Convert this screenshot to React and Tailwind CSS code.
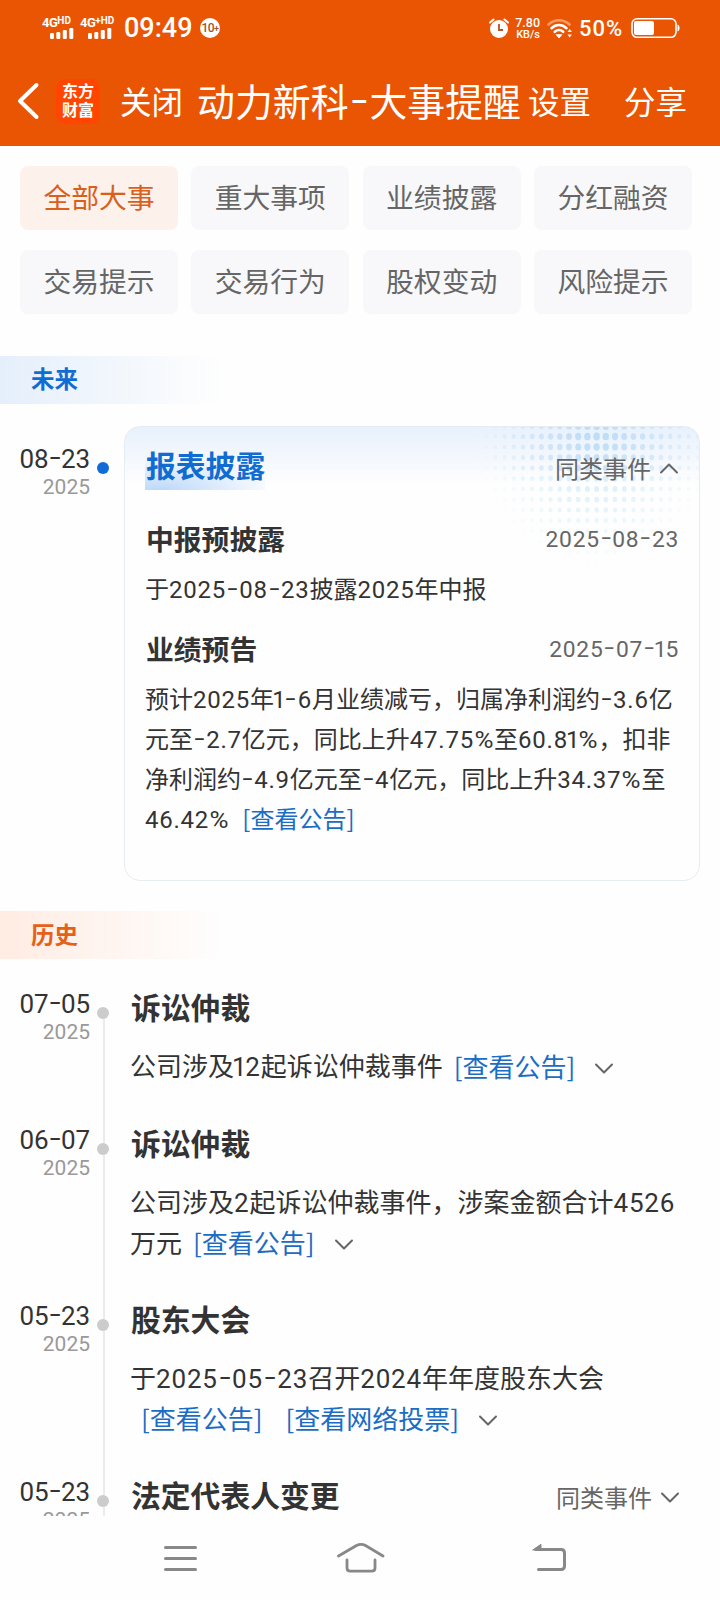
import React, { useState } from "react";

const TABS = [
  "全部大事",
  "重大事项",
  "业绩披露",
  "分红融资",
  "交易提示",
  "交易行为",
  "股权变动",
  "风险提示",
];

const REPORT_LINES = [
  "预计2025年1-6月业绩减亏，归属净利润约-3.6亿",
  "元至-2.7亿元，同比上升47.75%至60.81%，扣非",
  "净利润约-4.9亿元至-4亿元，同比上升34.37%至",
];

const HISTORY = [
  {
    date: "07-05",
    year: "2025",
    title: "诉讼仲裁",
    lines: [{ text: "公司涉及12起诉讼仲裁事件", links: ["[查看公告]"], more: true }],
  },
  {
    date: "06-07",
    year: "2025",
    title: "诉讼仲裁",
    lines: [
      { text: "公司涉及2起诉讼仲裁事件，涉案金额合计4526" },
      { text: "万元", links: ["[查看公告]"], more: true },
    ],
  },
  {
    date: "05-23",
    year: "2025",
    title: "股东大会",
    lines: [
      { text: "于2025-05-23召开2024年年度股东大会" },
      { text: "", links: ["[查看公告]", "[查看网络投票]"], more: true },
    ],
  },
  {
    date: "05-23",
    year: "2025",
    title: "法定代表人变更",
    similar: true,
    lines: [],
  },
];

// Latin digits use Roboto, hyphens are widened to almost a full digit
function Txt({ children, tight }) {
  return children.split(/(-|1|%|[\d.]+?(?=[^\d.]|1|$))/).map((part, i) => {
    if (part === "-") {
      return (
        <span
          key={i}
          className={`inline-block -translate-y-[0.07em] scale-x-[1.5] text-center font-['Roboto'] leading-none ${
            tight ? "w-[0.48em]" : "w-[0.55em]"
          }`}
        >
          -
        </span>
      );
    }
    if (part === "1") {
      return (
        <span key={i} className="-ml-[0.08em] -mr-[0.05em] font-['Roboto']">
          1
        </span>
      );
    }
    if (part === "%") {
      return (
        <span key={i} className="inline-block w-[0.84em] scale-x-[1.08] text-center font-['Roboto'] leading-none">
          %
        </span>
      );
    }
    if (/^[\d.]+$/.test(part)) {
      return (
        <span key={i} className={tight ? "font-['Roboto'] tracking-[-0.005em]" : "font-['Roboto'] tracking-[0.032em]"}>
          {part}
        </span>
      );
    }
    return part;
  });
}

function Chevron({ up, className = "" }) {
  return (
    <svg width="20" height="12" viewBox="0 0 20 12" fill="none" className={className}>
      <path
        d={up ? "M2 10.5 10 2.5 18 10.5" : "M2 1.5 10 9.5 18 1.5"}
        stroke="#666"
        strokeWidth="2"
        strokeLinecap="round"
        strokeLinejoin="round"
      />
    </svg>
  );
}

function Signal({ label, sup }) {
  return (
    <div className="flex flex-col">
      <div className="flex h-[11px] items-start whitespace-nowrap font-['Roboto'] font-bold leading-none">
        <span className="text-[13px] leading-[12px] tracking-[-0.5px]">{label}</span>
        <span className="text-[10px] leading-[8px]">{sup}</span>
      </div>
      <svg width="24" height="11" viewBox="0 0 24 11" fill="#fff" className="ml-2">
        <rect x="0" y="5" width="4" height="6" rx="1.2" />
        <rect x="6.3" y="4" width="4" height="7" rx="1.2" />
        <rect x="12.8" y="2" width="4" height="9" rx="1.2" />
        <rect x="19.3" y="0" width="4" height="11" rx="1.2" />
      </svg>
    </div>
  );
}

function StatusBar() {
  return (
    <div className="flex h-[56px] items-start pl-[42px] pr-10 pt-4 text-white">
      <div className="mt-px w-[38px]">
        <Signal label="4G" sup="HD" />
      </div>
      <div className="mt-px w-[44px]">
        <Signal label="4G" sup="+HD" />
      </div>
      <span className="w-[76px] font-['Roboto'] text-[27px] font-medium leading-[24px]">09:49</span>
      <span className="mt-[2px] flex size-5 items-center justify-center rounded-full bg-white font-['Roboto'] text-[12px] font-medium leading-none tracking-[-0.5px] text-[#a5532a]">
        10<span className="pt-[3px] text-[9px]">+</span>
      </span>
      <div className="ml-auto flex">
        <svg width="20" height="22" viewBox="0 0 20 22" className="-ml-[2px] mr-[2px] mt-[2px]">
          <circle cx="10" cy="11" r="9" fill="#fff" />
          <path d="M1 4.5 4.5 1.5M19 4.5 15.5 1.5" stroke="#fff" strokeWidth="2" strokeLinecap="round" />
          <path d="M10 6v6h4" stroke="#b5541f" strokeWidth="1.8" fill="none" />
        </svg>
        <div className="ml-[2px] mr-[2px] flex w-[27px] flex-col items-end whitespace-nowrap pt-px font-['Roboto'] font-medium">
          <span className="text-[12.5px] leading-[12px]">7.80</span>
          <span className="text-[11px] leading-[11px]">KB/s</span>
        </div>
        <svg width="26" height="22" viewBox="0 0 26 22" fill="none" strokeWidth="2.6" strokeLinecap="round" className="ml-[5px] mt-[2px]">
          <path d="M1.5 6.5C7.5 0.8 16.5 0.8 22.5 6.5" stroke="#f89a63" />
          <path d="M4.5 10.2C9 6 15 6 19.5 10.2" stroke="#fff" />
          <path d="M7.8 13.8C10.5 11.5 13.5 11.5 16.2 13.8" stroke="#fff" />
          <path d="M9.5 17 12 20 14.5 17Z" fill="#fff" stroke="#fff" strokeWidth="1" />
          <path d="M20.5 14 22.7 11 24.9 14ZM20.5 16.5 22.7 19.5 24.9 16.5Z" fill="#fff" />
        </svg>
        <span className="ml-[6px] w-[52px] font-['Roboto'] text-[22px] font-medium leading-[26px] tracking-[1px]">50%</span>
        <svg width="49" height="22" viewBox="0 0 49 22" fill="none" className="mt-px">
          <rect x="1" y="1.8" width="44" height="18.5" rx="5" stroke="#fff" strokeWidth="1.6" />
          <rect x="3" y="4" width="20" height="14" rx="2" fill="#fff" />
          <path d="M46.500 7.500c1.500.4 2 1.600 2 3.500s-.5 3.100-2 3.500z" fill="#fff" />
        </svg>
      </div>
    </div>
  );
}

function Header() {
  return (
    <header className="h-[146px] bg-[#ea5504] text-white">
      <StatusBar />
      <div className="flex h-[88px] items-center pl-[16px] text-[31.5px] leading-[46px]">
        <svg width="24" height="38" viewBox="0 0 24 38" fill="none" className="mt-[2px] shrink-0">
          <path d="M20.500 3 4 19 20.500 35" stroke="#fff" strokeWidth="4" strokeLinecap="round" strokeLinejoin="round" />
        </svg>
        <div className="ml-4 mt-[2px] flex h-[45px] w-[44px] shrink-0 flex-col items-center justify-center rounded-[9px] bg-[#ff4500] pb-[3px] text-[16px] font-bold leading-[19px]">
          <span>东方</span>
          <span>财富</span>
        </div>
        <span className="ml-5 w-[77px] shrink-0">关闭</span>
        <h1 className="w-[331px] shrink-0 whitespace-nowrap text-[37.9px]">
          <Txt>动力新科-大事提醒</Txt>
        </h1>
        <span className="w-[96px] shrink-0">设置</span>
        <span className="shrink-0">分享</span>
      </div>
    </header>
  );
}

function DateCol({ date, year }) {
  return (
    <div className="w-[90px] shrink-0 text-right font-['Roboto']">
      <div className="whitespace-nowrap text-[26px] leading-[35px] text-[#333]">
        <Txt tight>{date}</Txt>
      </div>
      <div className="text-[21px] leading-[20px] text-[#999]">{year}</div>
    </div>
  );
}

// halftone dots in the card's top right corner, strongest around the centre
function Halftone() {
  const dots = [];
  for (let r = 0; r < 14; r++) {
    for (let c = 0; c < 25; c++) {
      const x = 8 + c * 9.2;
      const y = r * 10.5 - 1;
      const d = Math.hypot((x - 128) / 125, y / 145);
      if (d < 1) dots.push({ x, y, k: 1 - d, row: r });
    }
  }
  return (
    <svg width="230" height="146" className="absolute right-0 top-0">
      {dots.map((p, i) => (
        <ellipse
          key={i}
          cx={p.x}
          cy={p.y}
          rx={1.4 + p.k * 2}
          ry={1.6 + p.k * 2.5}
          fill={p.row < 5 ? "#afd6f6" : "#bce6f6"}
          opacity={Math.min(0.75, p.k * 0.85)}
        />
      ))}
    </svg>
  );
}

function FutureCard() {
  return (
    <div className="relative h-[455px] w-[576px] overflow-hidden rounded-2xl border border-[#e6edf2] bg-linear-to-b from-[#e8f1fc] to-[#fefefe] to-[58px] px-5 text-[#333]">
      <Halftone />
      <div className="relative">
        <div className="flex h-[83px] items-center justify-between">
          <h2 className="-mt-px h-[44px] bg-[radial-gradient(100%_75%_at_12%_100%,#bcd8fa,transparent)] pl-px text-[29.8px] font-bold leading-[36px] text-[#116cd2]">
            报表披露
          </h2>
          <div className="-mt-[2px] flex items-center text-2xl text-[#666]">
            同类事件
            <Chevron up className="ml-[8px]" />
          </div>
        </div>
        <div className="mt-[9px] flex h-10 items-center justify-between">
          <h3 className="pl-px text-[27.8px] font-bold">中报预披露</h3>
          <span className="mt-px text-[22.8px] text-[#666]">
            <Txt>2025-08-23</Txt>
          </span>
        </div>
        <p className="mt-[9px] h-10 text-2xl leading-10">
          <Txt>于2025-08-23披露2025年中报</Txt>
        </p>
        <div className="mt-[21px] flex h-10 items-center justify-between">
          <h3 className="pl-px text-[27.8px] font-bold">业绩预告</h3>
          <span className="mt-px text-[22.8px] text-[#666]">
            <Txt>2025-07-15</Txt>
          </span>
        </div>
        <div className="mt-[9px] whitespace-nowrap text-2xl leading-10">
          {REPORT_LINES.map((line) => (
            <p key={line} className="h-10">
              <Txt>{line}</Txt>
            </p>
          ))}
          <p className="h-10">
            <Txt>46.42%</Txt>
            <a className="ml-[13px] text-[#1a6cc4]">[查看公告]</a>
          </p>
        </div>
      </div>
    </div>
  );
}

function HistoryItem({ item, first }) {
  return (
    <div className="flex">
      <DateCol date={item.date} year={item.year} />
      <div className="ml-[7px] flex w-3 shrink-0 flex-col">
        <div className={first ? "h-5 w-[2px]" : "ml-[6px] h-5 w-[2px] bg-[#ebebeb]"} />
        <div className="size-3 rounded-full bg-[#ccc]" />
        <div className="ml-[6px] w-[2px] flex-1 bg-[#ebebeb]" />
      </div>
      <div className="ml-[21px] w-[550px] pb-[37px]">
        <div className="flex h-10 items-center justify-between">
          <h3 className="-mt-[2px] pl-px text-[29.8px] font-bold text-[#333]">{item.title}</h3>
          {item.similar && (
            <div className="mt-1 flex items-center text-2xl text-[#666]">
              同类事件
              <Chevron className="ml-[8px] mt-px" />
            </div>
          )}
        </div>
        <div className="mt-[19px] text-[26px] leading-10 text-[#333]">
          {item.lines.map((line, i) => (
            <div key={i} className="flex h-10 items-center whitespace-nowrap">
              <span>
                <Txt>{line.text}</Txt>
              </span>
              {line.links?.map((link, j) => (
                <a key={link} className={j ? "-mt-px ml-[23px] text-[#1a6cc4]" : "-mt-px ml-[11px] text-[#1a6cc4]"}>
                  {link}
                </a>
              ))}
              {line.more && <Chevron className="ml-[19px] mt-[5px]" />}
            </div>
          ))}
        </div>
      </div>
    </div>
  );
}

function NavBar() {
  return (
    <nav className="flex h-[84px] items-start bg-[#fefefe] pl-[163px] pt-[25px]">
      <svg width="36" height="34" viewBox="0 0 36 34" stroke="#888" strokeWidth="3" strokeLinecap="round">
        <path d="M2.5 6.5h30M2.5 17.5h30M2.5 28.5h30" />
      </svg>
      <svg width="48" height="34" viewBox="0 0 48 34" fill="none" stroke="#888" strokeWidth="2.8" strokeLinecap="round" className="ml-[138px]">
        <path d="M1.5 15 19.5 4.5Q24 2.1 28.5 4.5L46 15" />
        <path d="M10 19v8q0 3.2 3.2 3.2h21.6q3.2 0 3.2-3.2V19" />
      </svg>
      <svg width="36" height="34" viewBox="0 0 36 34" fill="none" stroke="#888" strokeWidth="3" strokeLinecap="round" className="ml-[146px]">
        <path d="M5 8.5h25q3.5 0 3.5 3.5v13q0 3.5-3.5 3.5H7.500" />
        <path d="M2 8.8 10 3.3V8.8Z" fill="#888" strokeWidth="1" />
      </svg>
    </nav>
  );
}

export default function App() {
  const [active, setActive] = useState(0);

  return (
    <div className="flex h-[1600px] w-[720px] flex-col overflow-hidden bg-[#fefefe] font-['Noto_Sans_CJK_SC',sans-serif]">
      <Header />
      <main className="h-[1370px] overflow-hidden">
        <div className="ml-5 mt-5 grid w-[672px] grid-cols-4 gap-x-[13.3px] gap-y-5">
          {TABS.map((tab, i) => (
            <button
              key={tab}
              onClick={() => setActive(i)}
              className={`h-16 rounded-lg pb-[3px] text-[27.8px] leading-none ${
                i === active ? "bg-[#fdf1eb] text-[#d9601c]" : "bg-[#f8f8fa] text-[#666]"
              }`}
            >
              {tab}
            </button>
          ))}
        </div>

        <div className="mt-[42px] h-12 w-[224px] bg-linear-to-r from-[#e5effb] to-[#fefefe] pl-[31px] text-[23.5px] font-bold leading-[45px] text-[#116cd2]">
          未来
        </div>
        <section className="mt-[22px] flex">
          <div className="flex pt-[16px]">
            <DateCol date="08-23" year="2025" />
            <div className="ml-[7px] mt-5 size-3 rounded-full bg-[#116cd8]" />
          </div>
          <div className="ml-[15px]">
            <FutureCard />
          </div>
        </section>

        <div className="mt-[30px] h-12 w-[224px] bg-linear-to-r from-[#ffece3] to-[#fefefe] pl-[31px] text-[23.5px] font-bold leading-[46px] text-[#e4611a]">
          历史
        </div>
        <section className="mt-7">
          {HISTORY.map((item, i) => (
            <HistoryItem key={i} item={item} first={i === 0} />
          ))}
        </section>
      </main>
      <NavBar />
    </div>
  );
}
